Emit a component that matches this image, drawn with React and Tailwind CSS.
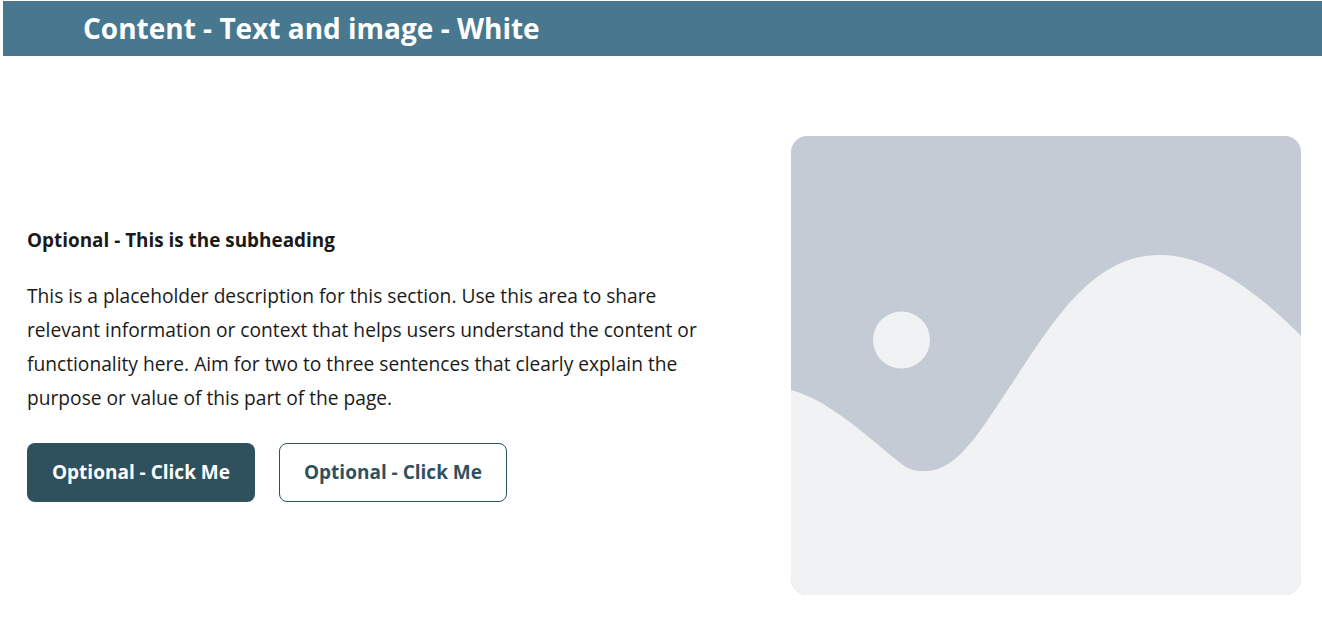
export default function App() {
  return (
    <div className="h-[622px] overflow-hidden bg-white font-['Open_Sans',sans-serif]">
      <header className="mt-px ml-[3px] flex h-[55px] items-center bg-[#47788f] pb-[2px] pl-20">
        <h1 className="text-[28px] leading-none font-bold text-white">Content - Text and image - White</h1>
      </header>
      <main className="flex items-center justify-between pt-20 pr-[21px] pl-[27px]">
        <div className="w-[680px] pb-[6px]">
          <h2 className="text-[18.9px] leading-[34px] font-bold text-[#1a1a1a]">Optional - This is the subheading</h2>
          <p className="mt-[22px] text-[19.2px] leading-[34px] text-[#1a1a1a]">
            This is a placeholder description for this section. Use this area to share relevant information or context that helps users understand the content or functionality here. Aim for two to three sentences that clearly explain the purpose or value of this part of the page.
          </p>
          <div className="mt-7 flex gap-6">
            <button className="h-[59px] w-[228px] rounded-lg bg-[#2f515e] text-[19px] font-bold text-white">Optional - Click Me</button>
            <button className="h-[59px] w-[228px] rounded-lg border border-[#2f515e] bg-white text-[19px] font-bold text-[#2f515e]">Optional - Click Me</button>
          </div>
        </div>
        <svg viewBox="0 0 510 459" className="block h-[459px] w-[510px] rounded-2xl" aria-hidden="true">
          <rect width="510" height="459" fill="#c4cbd4" />
          <circle cx="110.5" cy="204" r="28.5" fill="#f1f2f4" />
          <path d="M0 254C40 265 75 300 112 329C120 335 127 335 135 335C168 335 192 290 222 246C264 183 302 119 369 119C420 119 470 160 510 200V459H0Z" fill="#f1f2f4" />
        </svg>
      </main>
    </div>
  );
}
